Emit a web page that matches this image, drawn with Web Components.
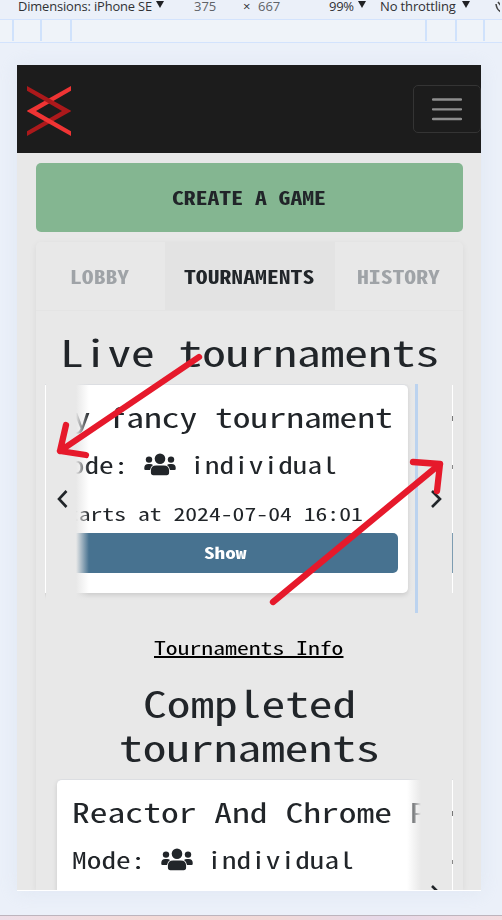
<!DOCTYPE html>
<html lang="en"><head><meta charset="utf-8"><title>Tournaments</title>
<style>
html,body{margin:0;width:502px;height:920px;overflow:hidden}
body{background:#ebf0f9;color:#212529;font-family:"Noto Sans Mono CJK SC","Liberation Mono",monospace}
</style></head><body><preview-window></preview-window>
<script>
const define=(name,markup)=>customElements.define(name,class extends HTMLElement{
  constructor(){super();this.attachShadow({mode:'open'}).innerHTML=typeof markup==='function'?markup(this):markup;}
});

// Wide monospace text: every character takes 0.6em.
customElements.define('mono-text',class extends HTMLElement{
  connectedCallback(){
    if(this.shadowRoot)return;
    const n=this.textContent.length;
    this.attachShadow({mode:'open'}).innerHTML=`<style>:host{display:inline-block;vertical-align:top;width:${n*.6}em;white-space:pre;text-align:left}
span{display:block;font-size:.92em;width:${n*.5}em;transform:scaleX(1.30435);transform-origin:0 0}
:host([underline]) span{text-decoration:underline;text-decoration-thickness:1.6px;text-underline-offset:1px;text-decoration-skip-ink:none}</style><span><slot></slot></span>`;
  }
});

define('people-icon',`<style>:host{display:inline-block;width:32px;height:23px;flex:none}svg{display:block}</style>
<svg width="32" height="23" viewBox="0 0 32 23" fill="#212529"><circle cx="16" cy="5.8" r="5.3"/><circle cx="5" cy="6.6" r="3.2"/><circle cx="27" cy="6.6" r="3.2"/><path d="M12.2 12.4h7.6q5.3 0 5.3 5.2v2q0 2.7-2.5 2.7H9.4q-2.5 0-2.5-2.7v-2q0-5.2 5.3-5.2zM.3 16v-1.2q0-3.9 4-3.9h1.7q2 0 3 1-2.4 1.3-3 5H1.4q-1.1 0-1.1-.9zM31.7 16v-1.2q0-3.9-4-3.9H26q-2 0-3 1 2.4 1.3 3 5h4.6q1.1 0 1.1-.9z"/></svg>`);

define('brand-logo',`<style>:host{display:block;width:44px;height:50px}svg{display:block}</style>
<svg width="44" height="50" viewBox="0 0 44 50"><path d="M44 0v4.8L9 25H0v-.3z" fill="#ef3434"/><path d="M0 50v-4.8L35 25h9v.3z" fill="#ab191b"/><path d="M0 0v4.8L35 25h9v-.3z" fill="#ab191b"/><path d="M44 50v-4.8L9 25H0v.3z" fill="#ef3434"/></svg>`);

define('tool-bar',`<style>:host{display:flex;height:19px;border-bottom:1px solid #d3e3fd;font:13px/13px "Open Sans","Noto Sans",sans-serif;color:#303134;white-space:nowrap}
span{display:block;flex:none}.n{color:#606368}i{display:block;border:4.5px solid transparent;border-top:7px solid #202124;border-bottom:0;height:0;margin-top:1px;flex:none}
.a{width:138px;margin-left:18px;font-size:12.9px;letter-spacing:-.14px}</style>
<span class="a"><slot name="device"></slot></span><i></i>
<span class="n" style="margin-left:30px;width:49px">375</span><span style="width:15px">×</span><span class="n" style="width:71px">667</span><span style="width:29px;letter-spacing:-.3px">99%</span><i></i><span style="margin-left:14px;width:82px;letter-spacing:-.14px">No throttling</span><i></i>
<svg width="6" height="14" style="margin-left:24px;flex:none"><path d="M2 4q1 7 6 8M4 2l4 5" stroke="#444" stroke-width="1.6" fill="none"/></svg>`);

define('size-ruler',`<style>:host{display:grid;grid-template-columns:12px 26px 28px 353px 28px 26px 1fr;column-gap:2px;height:22px;border-bottom:1px solid #d3e3fd;background:#eff3f9}
b{display:block;height:21px;box-shadow:2px 0 #d0e2fc}b:last-child{box-shadow:none}</style><b></b><b></b><b></b><b></b><b></b><b></b><b></b>`);

define('nav-bar',`<style>:host{display:flex;justify-content:space-between;align-items:flex-start;height:88px;background:#1c1c1c;box-sizing:border-box;padding-left:10px}
brand-logo{margin-top:21px}button{width:68px;height:48px;margin:20px 0 0;padding:0;border:1px solid #343434;border-radius:5px;background:none;display:grid;place-content:center}svg{display:block}</style>
<brand-logo></brand-logo><button aria-label="Menu"><svg width="30" height="23" stroke="#8e8e8e" stroke-width="2.3" stroke-linecap="round"><path d="M1 1.5h28M1 11.3h28M1 21h28"/></svg></button>`);

define('tab-strip',`<style>:host{display:grid;grid-template-columns:129px 170px 128px;height:68px;border-bottom:1px solid #e4e4e4;font-weight:700;font-size:19.75px;line-height:68px;text-align:center}
div{color:#9fa3a7;padding-right:2px}.on{background:#e3e3e3;color:#212529}</style><div><mono-text>LOBBY</mono-text></div><div class="on"><mono-text>TOURNAMENTS</mono-text></div><div><mono-text>HISTORY</mono-text></div>`);

define('tournament-card',el=>`<style>:host{display:block;box-sizing:border-box;width:352px;height:209px;flex:none;background:#fff;border-top:1px solid #dcdee2;border-radius:5px;padding:13px 10px 0 15px;box-shadow:0 2px 5px #0002;white-space:nowrap}
h5,p{margin:0;font-weight:400}h5{font-size:29.65px;line-height:36px}.mode{font-size:24.5px;line-height:30px;margin-top:15px;display:flex;align-items:center}people-icon{margin:1px 14px 0 15px}
.date{font-size:19.75px;line-height:26px;margin-top:21px}.show{margin:7px 0 0 -5px;padding-left:3px;height:40px;border-radius:5px;background:#477290;color:#fff;font-weight:600;font-size:17.7px;line-height:38px;text-align:center}</style>
<h5><mono-text>${el.getAttribute('heading')}</mono-text></h5><p class="mode"><mono-text>Mode:</mono-text><people-icon></people-icon><mono-text>individual</mono-text></p><p class="date"><mono-text>Starts at 2024-07-04 16:01</mono-text></p><div class="show"><mono-text>Show</mono-text></div>`);

define('card-carousel',el=>{const first=el.hasAttribute('at-start');return `<style>
:host{display:block;position:relative;width:408px;height:229px;margin-left:9px;overflow:hidden;text-align:left}
.track{display:flex;padding-left:${first?12:0}px;margin-left:${first?0:-5}px}
.edge{position:absolute;top:0;height:229px;display:flex;align-items:center;box-sizing:border-box}
.left{left:1px;width:43px;background:linear-gradient(90deg,#e8e8e8 30px,#e8e8e800)}
.right{right:1px;width:45px;background:linear-gradient(270deg,#e8e8e8 31px,#e8e8e800)}
.snap{position:absolute;left:370px;top:0;width:3px;height:229px;background:#bcd3ef}
svg{display:block;flex:none}.sliver{position:absolute;right:0;width:1px;top:1px;height:208px;background:linear-gradient(#fff 31px,#777 31px 36px,#fff 36px 80px,#888 80px 84px,#fff 84px 148px,#7d9cb1 148px 188px,#fff 188px)}
.hairline{position:absolute;left:0;top:1px;width:1px;height:208px;background:#fff}
</style><div class="track"><slot></slot></div>
${first?'':`<div class="edge left"><svg width="30" height="24"><path d="M20.5 4l-7.5 8 7.5 8" fill="none" stroke="#212529" stroke-width="2.6"/></svg></div><div class="hairline"></div>`}
<div class="edge right"><svg width="45" height="24"><path d="M25 4l8 8-8 8" fill="none" stroke="#212529" stroke-width="2.6"/></svg></div>
${first?'':'<div class="snap"></div>'}<div class="sliver"></div>`;});

define('lobby-panel',`<style>:host{display:block;width:427px;height:648px;margin:10px 0 0 19px;border-radius:5px 5px 0 0;box-shadow:0 2px 7px #0001;text-align:center}
h2{font-weight:400;font-size:39.5px;line-height:44px;margin:0}.info{font-size:19.75px;line-height:24px;margin-top:22px;padding-right:1px;color:#000}</style>
<tab-strip></tab-strip><h2 style="margin-top:18px"><mono-text>Live tournaments</mono-text></h2>
<card-carousel style="margin-top:11px"><tournament-card heading="My fancy tournament" style="width:368px"></tournament-card></card-carousel>
<div class="info"><mono-text underline>Tournaments Info</mono-text></div><h2 style="margin-top:21px"><mono-text>Completed</mono-text><br><mono-text>tournaments</mono-text></h2>
<card-carousel at-start style="margin-top:11px"><tournament-card heading="Reactor And Chrome P" style="width:408px"></tournament-card></card-carousel>`);

define('device-frame',`<style>:host{display:block;width:464px;height:825px;margin:22px 0 0 17px;background:#e8e8e8;overflow:hidden;border-bottom:1px solid #fff}
.create{width:427px;height:69px;margin:10px 0 0 19px;background:#84b691;border-radius:5px;text-align:center;font-weight:700;font-size:19.75px;line-height:68px}</style>
<nav-bar></nav-bar><div class="create"><mono-text>CREATE A GAME</mono-text></div><lobby-panel></lobby-panel>`);

define('red-arrows',`<style>:host{position:absolute;inset:0;width:502px;height:920px;pointer-events:none}</style>
<svg width="502" height="920" fill="none" stroke="#e6192b" stroke-width="6.3" stroke-linecap="round" stroke-linejoin="round"><path d="M199 357L60 451M66 425l-6 26 26 4M273 602L440 464M413 462l27 2-3 27"/></svg>`);

define('preview-window',`<style>:host{display:flex;flex-direction:column;position:relative;width:502px;height:920px;overflow:hidden;background:#ebf0f9}
.outer{filter:drop-shadow(0 0 .7px #9aa0aa) drop-shadow(0 1px 9px #c9d5e855)}footer{margin-top:auto;height:4px;border-top:1px solid #bdb4bd;background:linear-gradient(90deg,#eedde7,#f4d9d6 30%,#f2d8d7 55%,#e7d8e8 76%,#f4dbdf)}</style>
<tool-bar><span slot="device">Dimensions: iPhone SE</span></tool-bar><size-ruler></size-ruler><div class="outer"><device-frame></device-frame></div><footer></footer><red-arrows></red-arrows>`);
</script></body></html>
